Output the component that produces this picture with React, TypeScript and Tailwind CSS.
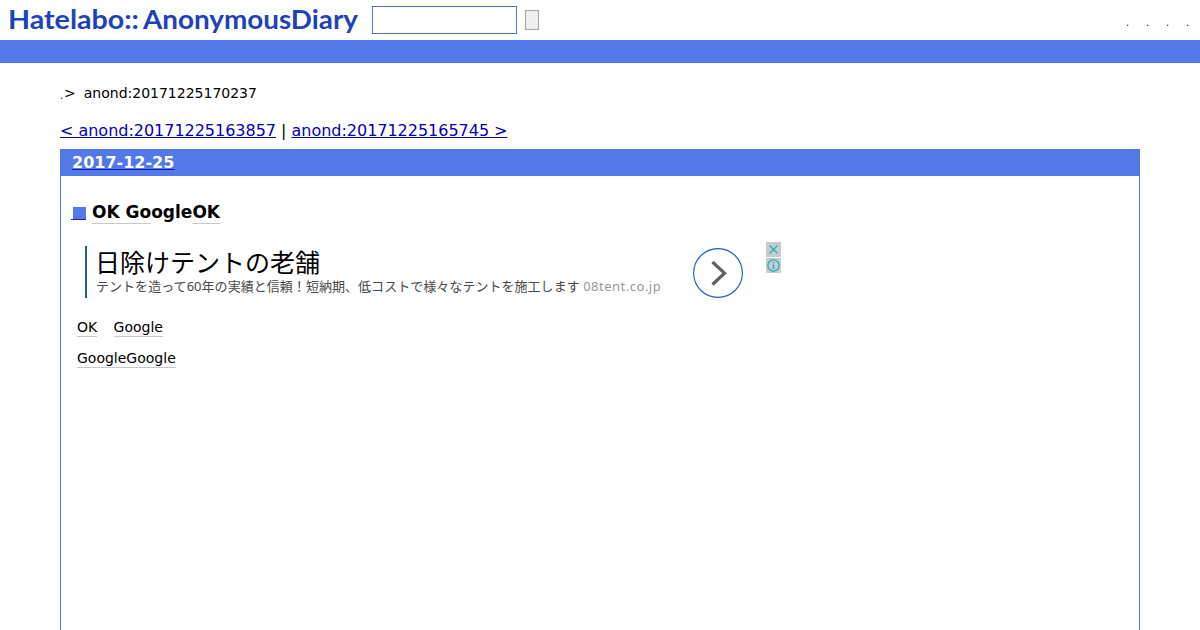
import React, { useState } from 'react';

const menuItems = ['.', '.', '.', '.'];

function Logo() {
  return (
    <svg width="372" height="40" viewBox="0 0 372 40" role="img" className="shrink-0 font-['Lato','Liberation_Sans',sans-serif] font-bold text-[26.5px]">
      <g fill="#1d43ba">
        <text x="8" y="29" textLength="131" lengthAdjust="spacingAndGlyphs">Hatelabo::</text>
        <text x="143" y="29" textLength="215" lengthAdjust="spacingAndGlyphs">AnonymousDiary</text>
      </g>
    </svg>
  );
}

function Header() {
  const [query, setQuery] = useState('');

  return (
    <header>
      <div className="h-10 flex items-center">
        <Logo />
        <input type="text" value={query} onChange={e => setQuery(e.target.value)}
          className="w-[145px] h-7 border border-[#5279b5] bg-white px-1 text-sm outline-none" />
        <button type="button" className="ml-2 w-3.5 h-5 border border-[#a5a5a5] bg-[#efefef]" />
        <ul className="ml-auto mr-[11px] mt-1.5 flex gap-[17px]">
          {menuItems.map((item, i) => (
            <li key={i} className="w-[3px] text-[10px] leading-[10px]">{item}</li>
          ))}
        </ul>
      </div>
      <div className="h-[23px] bg-[#5279e7]" />
    </header>
  );
}

function Keyword({ children }: { children: React.ReactNode }) {
  return <span className="inline-block border-b border-[#c8c8c8]">{children}</span>;
}

function Ad() {
  return (
    <div className="mt-[18px] ml-3.5 flex items-start font-['Noto_Sans','Noto_Sans_CJK_JP',sans-serif]">
      <div className="mt-1 w-[608px] h-[52px] border-l-2 border-[#2159a5] pl-2 whitespace-nowrap">
        <div className="text-[25px] leading-[33px]">日除けテントの老舗</div>
        <div className="pl-px text-[13px] leading-[15px] tracking-[0.04px] text-[#484848]">
          テントを造って60年の実績と信頼！短納期、低コストで様々なテントを施工します{' '}
          <span className="tracking-[0.5px] text-[#999]">08tent.co.jp</span>
        </div>
      </div>
      <svg width="50" height="50" viewBox="0 0 50 50" fill="none" className="mt-1.5">
        <circle cx="25" cy="25" r="24.4" stroke="#1a5cc8" strokeWidth="1.1" />
        <path d="M19.5 14 31.5 25.2 19.5 36.5" stroke="#616161" strokeWidth="3.2" />
      </svg>
      <div className="ml-[23px] flex flex-col gap-px">
        <svg width="15" height="15" viewBox="0 0 15 15" fill="none" className="bg-[#c9cbcb]">
          <path d="M3.5 3.5 11.5 11.5M11.5 3.5 3.5 11.5" stroke="#20aec4" strokeWidth="1.2" />
        </svg>
        <svg width="15" height="15" viewBox="0 0 15 15" fill="none" className="bg-[#c9cbcb]">
          <circle cx="7.5" cy="7.5" r="5.6" stroke="#20aec4" strokeWidth="1.2" />
          <path d="M7.5 6.5V11M7.5 4V5.3" stroke="#20aec4" strokeWidth="1.5" />
        </svg>
      </div>
    </div>
  );
}

export default function App() {
  return (
    <div className="h-[630px] overflow-hidden flex flex-col bg-white text-black font-['DejaVu_Sans',sans-serif]">
      <Header />
      <main className="flex-1 flex flex-col mx-[60px]">
        <div className="mt-5 h-5 flex text-sm leading-5">
          <span className="w-1 text-[10px] leading-[25px]">.</span>
          <span className="whitespace-pre">&gt;</span>
          <span className="ml-2">anond:20171225170237</span>
        </div>
        <nav className="mt-4 h-6 text-base leading-6 tracking-[-0.02px]">
          <a href="#" className="text-[#0000b8] underline">&lt; anond:20171225163857</a>
          {' | '}
          <a href="#" className="text-[#0000b8] underline">anond:20171225165745 &gt;</a>
        </nav>
        <section className="mt-1.5 flex-1 border-x border-[#5279b5]">
          <h2 className="-mx-px h-[27px] bg-[#5279e7] pl-3 text-base leading-7 font-bold">
            <a href="#" className="text-white underline decoration-[#0c20c8]">2017-12-25</a>
          </h2>
          <article className="pl-2.5">
            <h3 className="mt-[26px] h-[22px] flex items-start text-[17px] leading-[21px] font-bold">
              <a href="#" className="mt-[5px] mr-1.5 w-[15px] h-[13px] border-b border-[#2020a0] flex justify-end">
                <span className="w-[13px] h-3 bg-[#5279e7]" />
              </a>
              <Keyword>OK Go</Keyword>ogle<Keyword>OK</Keyword>
            </h3>
            <Ad />
            <div className="ml-1.5 mt-5 text-sm leading-[18px]">
              <p><Keyword>OK</Keyword><span className="inline-block w-[16.4px]" /><Keyword>Google</Keyword></p>
              <p className="mt-3"><Keyword>GoogleGoogle</Keyword></p>
            </div>
          </article>
        </section>
      </main>
    </div>
  );
}
